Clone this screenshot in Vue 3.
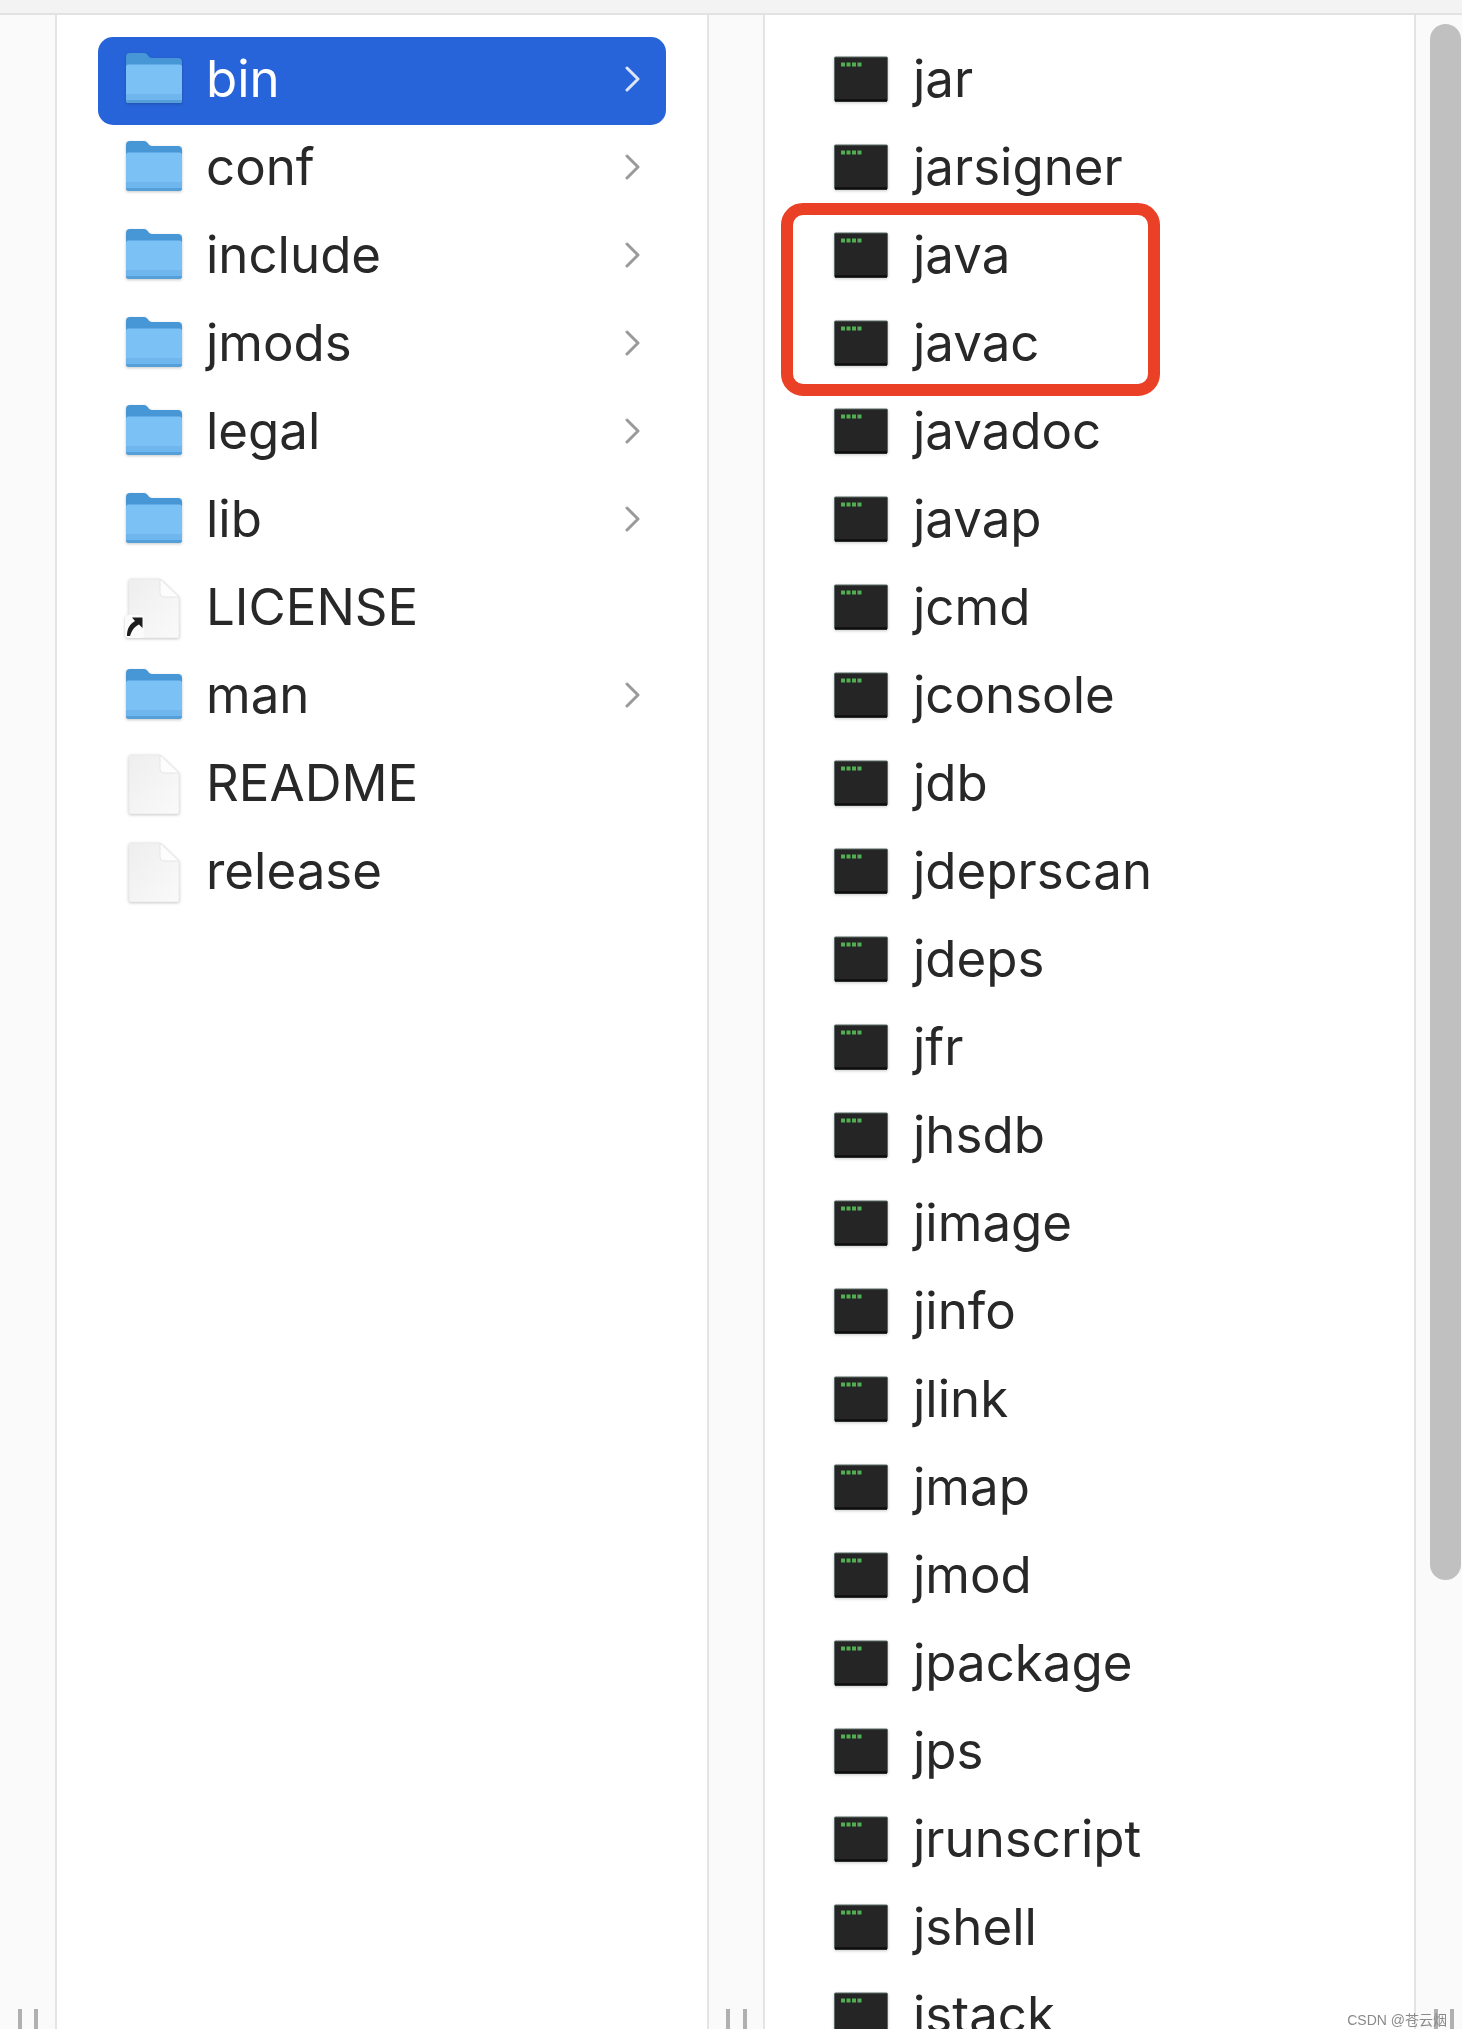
<script setup>
const folders = [
  { name: 'bin', kind: 'folder', selected: true },
  { name: 'conf', kind: 'folder' },
  { name: 'include', kind: 'folder' },
  { name: 'jmods', kind: 'folder' },
  { name: 'legal', kind: 'folder' },
  { name: 'lib', kind: 'folder' },
  { name: 'LICENSE', kind: 'alias' },
  { name: 'man', kind: 'folder' },
  { name: 'README', kind: 'file' },
  { name: 'release', kind: 'file' }
]
const binaries = ['jar','jarsigner','java','javac','javadoc','javap','jcmd','jconsole','jdb','jdeprscan','jdeps','jfr','jhsdb','jimage','jinfo','jlink','jmap','jmod','jpackage','jps','jrunscript','jshell','jstack']
</script>

<template>
  <div class="finder">
    <div class="topbar"></div>
    <div class="panes">
      <div class="gutter gutter-first"><span class="grip"><i></i><i></i></span></div>
      <div class="column column-left">
        <div v-for="item in folders" :key="item.name" class="row" :class="{ selected: item.selected }">
          <svg v-if="item.kind === 'folder'" class="icon shadow" width="60" height="56" viewBox="0 0 60 56">
            <path d="M2 6a4 4 0 0 1 4-4h14c4 0 4 5 8 5h26a4 4 0 0 1 4 4v19H2z" fill="#4797d6"/>
            <path d="M2 16a2.500 2.500 0 0 1 2.500-2.500h51A2.500 2.500 0 0 1 58 16v33a3 3 0 0 1-3 3H5a3 3 0 0 1-3-3z" fill="#7cc1f5"/>
            <path d="M2 43h56v6a3 3 0 0 1-3 3H5a3 3 0 0 1-3-3z" fill="#6fb6ee"/>
            <path d="M2 49h56a3 3 0 0 1-3 3H5a3 3 0 0 1-3-3z" fill="#559fd9"/>
          </svg>
          <svg v-else class="icon shadow" width="60" height="62" viewBox="0 0 60 62">
            <defs>
              <linearGradient id="sheet" x1="0" y1="0" x2="1" y2="1">
                <stop offset="0" stop-color="#eeeeee"/>
                <stop offset="1" stop-color="#fafafa"/>
              </linearGradient>
            </defs>
            <path d="M5 5a2 2 0 0 1 2-2h29l19 18v39a2 2 0 0 1-2 2H7a2 2 0 0 1-2-2z" fill="url(#sheet)" stroke="#ececec" stroke-width="1"/>
            <path d="M36 3v14a4 4 0 0 0 4 4h15z" fill="#fdfdfd" stroke="#e6e6e6" stroke-width="1"/>
            <template v-if="item.kind === 'alias'">
              <rect x="1" y="39" width="19" height="23" rx="3" fill="#fbfbfb"/>
              <path d="M3 60c0-8 3-12 8-15l-3-3.500h10.500V52L15 48.500c-4 2-7 5-9 11.500z" fill="#1d1d1d"/>
            </template>
          </svg>
          <span class="label">{{ item.name }}</span>
          <svg v-if="item.kind === 'folder'" class="chevron" width="16" height="26" viewBox="0 0 16 26">
            <path d="M2 2l11 11L2 24" fill="none" stroke="currentColor" stroke-width="3" stroke-linecap="round" stroke-linejoin="round"/>
          </svg>
        </div>
      </div>
      <div class="gutter gutter-middle"><span class="grip"><i></i><i></i></span></div>
      <div class="column column-right">
        <div v-for="name in binaries" :key="name" class="row">
          <svg class="icon shadow" width="56" height="48" viewBox="0 0 56 48">
            <rect x="1.500" y="2" width="53" height="44" rx="1" fill="#252525" stroke="#5d6a6a" stroke-width="1"/>
            <path d="M2 45.500h52" stroke="#0c0c0c" stroke-width="2.500"/>
            <path d="M8 9.500h21" stroke="#54ac54" stroke-width="4" stroke-dasharray="4 1.500"/>
          </svg>
          <span class="label">{{ name }}</span>
        </div>
      </div>
      <div class="gutter gutter-last"><span class="grip"><i></i><i></i></span></div>
      <div class="scrollthumb"></div>
      <div class="highlight"></div>
      <div class="watermark">CSDN @苍云烟</div>
    </div>
  </div>
</template>

<style>
body { background: #fff; }
</style>

<style scoped>
.finder {
  height: 2029px;
  overflow: hidden;
  display: flex;
  flex-direction: column;
  font-family: Inter, "Noto Sans CJK SC", sans-serif;
  color: #282828;
  filter: blur(0.7px);
}
.topbar {
  height: 13px;
  flex: none;
  background: #f3f3f3;
  border-bottom: 2px solid #e2e2e2;
}
.panes {
  flex: 1;
  display: flex;
  position: relative;
  min-height: 0;
}
.gutter {
  flex: none;
  background: #fafafa;
  position: relative;
}
.gutter-first { width: 55px; }
.gutter-middle { width: 54px; }
.gutter-last { width: 46px; }
.grip {
  position: absolute;
  bottom: 0;
  display: flex;
  height: 20px;
}
.grip i {
  display: block;
  width: 4px;
  background: #b0b0b0;
}
.gutter-first .grip { left: 18px; gap: 12px; }
.gutter-middle .grip { left: 17px; gap: 13px; }
.gutter-last .grip { left: 18px; gap: 12px; }
.column {
  flex: none;
  box-sizing: border-box;
  overflow: hidden;
  background: #fff;
  padding-top: 22px;
  border-left: 2px solid #e4e4e4;
  border-right: 2px solid #e4e4e4;
}
.column-left { width: 654px; padding-left: 41px; padding-right: 41px; }
.column-right { width: 653px; padding-left: 68px; }
.row {
  display: flex;
  align-items: center;
  height: 88px;
  padding-bottom: 5px;
  box-sizing: border-box;
  border-radius: 15px;
}
.column-left .row { padding-left: 26px; padding-right: 25px; }
.column-left .icon { margin-right: 22px; }
.column-right .icon { margin-right: 24px; }
.row.selected { background: #2864d9; color: #fff; }
.icon { flex: none; display: block; }
.shadow { filter: drop-shadow(0 1px 1.500px rgba(0, 0, 0, 0.22)); }
.label {
  font-size: 51px;
  line-height: 60px;
  white-space: nowrap;
}
.chevron { margin-left: auto; color: #9a9a9a; }
.selected .chevron { color: #dce6f8; }
.scrollthumb {
  position: absolute;
  left: 1430px;
  top: 9px;
  width: 31px;
  height: 1556px;
  border-radius: 16px;
  background: #c0c0c0;
}
.highlight {
  position: absolute;
  left: 781px;
  top: 188px;
  width: 379px;
  height: 193px;
  box-sizing: border-box;
  border: 12px solid #ea4025;
  border-radius: 22px;
}
.watermark {
  position: absolute;
  right: 15px;
  bottom: 0;
  font-family: "Liberation Sans", "Noto Sans CJK SC", sans-serif;
  font-size: 14px;
  line-height: 18px;
  color: #8a8a8a;
}
</style>
